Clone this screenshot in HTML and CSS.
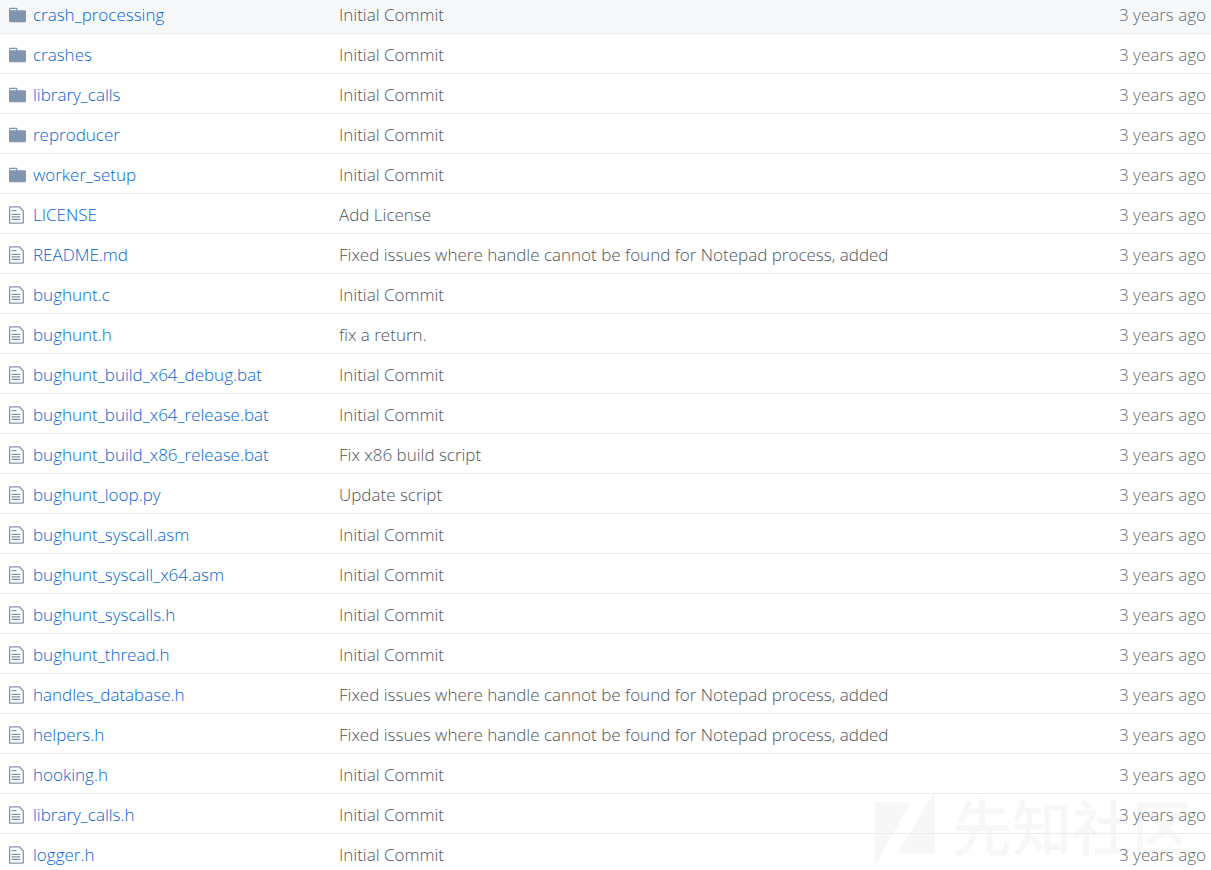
FILE: index.html
```html
<!DOCTYPE html>
<html lang="en">
<head>
<meta charset="utf-8">
<title>Repository files</title>
<link rel="stylesheet" href="styles.css">
</head>
<body>
<svg class="sprite" aria-hidden="true">
  <symbol id="folder" viewBox="0 0 14 16">
    <path fill-rule="evenodd" d="M13 4H7V3c0-.66-.31-1-1-1H1c-.55 0-1 .45-1 1v10c0 .55.45 1 1 1h12c.55 0 1-.45 1-1V5c0-.55-.45-1-1-1zM6 4H1V3h5v1z"/>
  </symbol>
  <symbol id="file" viewBox="0 0 12 16">
    <path fill-rule="evenodd" d="M6 5H2V4h4v1zM2 8h7V7H2v1zm0 2h7V9H2v1zm0 2h7v-1H2v1zm10-7.500V14c0 .55-.45 1-1 1H1c-.55 0-1-.45-1-1V2c0-.55.45-1 1-1h7.500L12 4.500zM11 5L8 2H1v12h10V5z"/>
  </symbol>
</svg>
<main class="listing">
<table class="files">
  <tbody>
    <tr class="row row-active"><td class="icon"><svg class="folder"><use href="#folder"/></svg></td><td class="name"><a href="#">crash_processing</a></td><td class="message">Initial Commit</td><td class="age">3 years ago</td></tr>
    <tr class="row"><td class="icon"><svg class="folder"><use href="#folder"/></svg></td><td class="name"><a href="#">crashes</a></td><td class="message">Initial Commit</td><td class="age">3 years ago</td></tr>
    <tr class="row"><td class="icon"><svg class="folder"><use href="#folder"/></svg></td><td class="name"><a href="#">library_calls</a></td><td class="message">Initial Commit</td><td class="age">3 years ago</td></tr>
    <tr class="row"><td class="icon"><svg class="folder"><use href="#folder"/></svg></td><td class="name"><a href="#">reproducer</a></td><td class="message">Initial Commit</td><td class="age">3 years ago</td></tr>
    <tr class="row"><td class="icon"><svg class="folder"><use href="#folder"/></svg></td><td class="name"><a href="#">worker_setup</a></td><td class="message">Initial Commit</td><td class="age">3 years ago</td></tr>
    <tr class="row"><td class="icon"><svg class="file"><use href="#file"/></svg></td><td class="name"><a href="#">LICENSE</a></td><td class="message">Add License</td><td class="age">3 years ago</td></tr>
    <tr class="row"><td class="icon"><svg class="file"><use href="#file"/></svg></td><td class="name"><a href="#">README.md</a></td><td class="message">Fixed issues where handle cannot be found for Notepad process, added</td><td class="age">3 years ago</td></tr>
    <tr class="row"><td class="icon"><svg class="file"><use href="#file"/></svg></td><td class="name"><a href="#">bughunt.c</a></td><td class="message">Initial Commit</td><td class="age">3 years ago</td></tr>
    <tr class="row"><td class="icon"><svg class="file"><use href="#file"/></svg></td><td class="name"><a href="#">bughunt.h</a></td><td class="message">fix a return.</td><td class="age">3 years ago</td></tr>
    <tr class="row"><td class="icon"><svg class="file"><use href="#file"/></svg></td><td class="name"><a href="#">bughunt_build_x64_debug.bat</a></td><td class="message">Initial Commit</td><td class="age">3 years ago</td></tr>
    <tr class="row"><td class="icon"><svg class="file"><use href="#file"/></svg></td><td class="name"><a href="#">bughunt_build_x64_release.bat</a></td><td class="message">Initial Commit</td><td class="age">3 years ago</td></tr>
    <tr class="row"><td class="icon"><svg class="file"><use href="#file"/></svg></td><td class="name"><a href="#">bughunt_build_x86_release.bat</a></td><td class="message">Fix x86 build script</td><td class="age">3 years ago</td></tr>
    <tr class="row"><td class="icon"><svg class="file"><use href="#file"/></svg></td><td class="name"><a href="#">bughunt_loop.py</a></td><td class="message">Update script</td><td class="age">3 years ago</td></tr>
    <tr class="row"><td class="icon"><svg class="file"><use href="#file"/></svg></td><td class="name"><a href="#">bughunt_syscall.asm</a></td><td class="message">Initial Commit</td><td class="age">3 years ago</td></tr>
    <tr class="row"><td class="icon"><svg class="file"><use href="#file"/></svg></td><td class="name"><a href="#">bughunt_syscall_x64.asm</a></td><td class="message">Initial Commit</td><td class="age">3 years ago</td></tr>
    <tr class="row"><td class="icon"><svg class="file"><use href="#file"/></svg></td><td class="name"><a href="#">bughunt_syscalls.h</a></td><td class="message">Initial Commit</td><td class="age">3 years ago</td></tr>
    <tr class="row"><td class="icon"><svg class="file"><use href="#file"/></svg></td><td class="name"><a href="#">bughunt_thread.h</a></td><td class="message">Initial Commit</td><td class="age">3 years ago</td></tr>
    <tr class="row"><td class="icon"><svg class="file"><use href="#file"/></svg></td><td class="name"><a href="#">handles_database.h</a></td><td class="message">Fixed issues where handle cannot be found for Notepad process, added</td><td class="age">3 years ago</td></tr>
    <tr class="row"><td class="icon"><svg class="file"><use href="#file"/></svg></td><td class="name"><a href="#">helpers.h</a></td><td class="message">Fixed issues where handle cannot be found for Notepad process, added</td><td class="age">3 years ago</td></tr>
    <tr class="row"><td class="icon"><svg class="file"><use href="#file"/></svg></td><td class="name"><a href="#">hooking.h</a></td><td class="message">Initial Commit</td><td class="age">3 years ago</td></tr>
    <tr class="row"><td class="icon"><svg class="file"><use href="#file"/></svg></td><td class="name"><a href="#">library_calls.h</a></td><td class="message">Initial Commit</td><td class="age">3 years ago</td></tr>
    <tr class="row"><td class="icon"><svg class="file"><use href="#file"/></svg></td><td class="name"><a href="#">logger.h</a></td><td class="message">Initial Commit</td><td class="age">3 years ago</td></tr>
  </tbody>
</table>
<div class="watermark" lang="zh">
  <svg class="mark" viewBox="0 0 60 74" aria-hidden="true"><path d="M0 11h36L0 74zM60 0v62H23z" fill="#f7f7f7"/></svg>
  <span>先知社区</span>
</div>
</main>
</body>
</html>
```
FILE: styles.css
```css
body {
  margin: 0;
  background: #fff;
  color: #4c545d;
  font: 340 17px/24px "Open Sans", "Noto Sans", sans-serif;
}

.sprite {
  position: absolute;
  width: 0;
  height: 0;
}

.listing {
  position: relative;
  z-index: 0;
}

.files {
  width: 100%;
  border-collapse: separate;
  border-spacing: 0;
  table-layout: fixed;
}

.row td {
  padding: 9px 0 6px;
  border-bottom: 1px solid #eaecef;
  white-space: nowrap;
}

.row:last-child td {
  padding-bottom: 3px;
  border-bottom: 0;
}

.row-active td {
  padding-top: 3px;
  background: #f6f8fa;
}

.row .icon {
  width: 24px;
  padding-left: 9px;
}

.icon svg {
  display: block;
  height: 20px;
  fill: #8096b0;
}

.folder {
  width: 17px;
}

.file {
  width: 15px;
}

.name {
  width: 306px;
}

.name a {
  color: #0366d6;
  text-decoration: none;
}

.age {
  width: 120px;
  color: #616a74;
  text-align: right;
}

.row .age {
  padding-right: 5px;
}

.watermark {
  position: absolute;
  z-index: -1;
  right: 19px;
  bottom: 5px;
  display: flex;
  align-items: flex-start;
  gap: 17px;
  color: #f7f7f7;
  font: 500 60px/68px "Noto Sans CJK SC", sans-serif;
}

.mark {
  width: 60px;
  height: 74px;
}
```
